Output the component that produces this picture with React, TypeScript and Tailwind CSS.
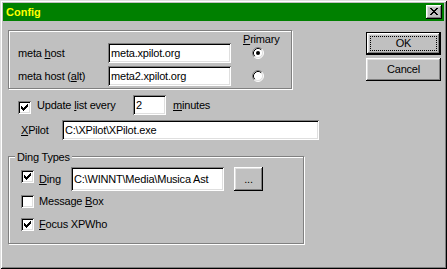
import React from "react";

// classic 3D bevels
const sunken =
  "shadow-[inset_1px_1px_0_#808080,inset_-1px_-1px_0_#ffffff,inset_2px_2px_0_#000000,inset_-2px_-2px_0_#dfdfdf]";
const raised =
  "shadow-[inset_-1px_-1px_0_#000000,inset_1px_1px_0_#ffffff,inset_-2px_-2px_0_#808080,inset_2px_2px_0_#dfdfdf]";
const etched = "border border-[#808080] shadow-[inset_1px_1px_0_#ffffff,1px_1px_0_#ffffff]";

function TextBox({ value, className }: { value: string; className: string }) {
  return (
    <div className={`bg-white ${sunken} pl-[3px] flex items-center overflow-hidden whitespace-nowrap shrink-0 ${className}`}>
      {value}
    </div>
  );
}

function CheckBox({ checked = false, className = "" }: { checked?: boolean; className?: string }) {
  return (
    <div className={`w-[13px] h-[13px] shrink-0 bg-white ${sunken} ${className}`}>
      {checked && (
        <svg width="13" height="13" className="block" shapeRendering="crispEdges">
          <path
            d="M3 5h1v3H3z M4 6h1v3H4z M5 7h1v3H5z M6 6h1v3H6z M7 5h1v3H7z M8 4h1v3H8z M9 3h1v3H9z"
            fill="#000"
          />
        </svg>
      )}
    </div>
  );
}

function Radio({ checked = false }: { checked?: boolean }) {
  return (
    <svg width="12" height="12" viewBox="0 0 12 12" className="block shrink-0">
      <circle cx="6" cy="6" r="5" fill="#fff" />
      <path d="M2.11 9.89A5.5 5.5 0 0 1 9.89 2.11" stroke="#808080" fill="none" />
      <path d="M9.89 2.11A5.5 5.5 0 0 1 2.11 9.89" stroke="#fff" fill="none" />
      <path d="M2.82 9.18A4.5 4.5 0 0 1 9.18 2.82" stroke="#000" fill="none" />
      <path d="M9.18 2.82A4.5 4.5 0 0 1 2.82 9.18" stroke="#dfdfdf" fill="none" />
      {checked && <circle cx="6" cy="6" r="2" fill="#000" />}
    </svg>
  );
}

export default function App() {
  return (
    <div className="w-[447px] h-[269px] bg-[#c0c0c0] p-[3px] flex flex-col font-['Liberation_Sans',Arial,sans-serif] text-[11px] leading-[13px] tracking-[-0.2px] text-black shadow-[inset_1px_1px_0_#dfdfdf,inset_-1px_-1px_0_#000000,inset_2px_2px_0_#ffffff,inset_-2px_-2px_0_#808080]">
      {/* Title bar */}
      <div className="h-[18px] shrink-0 bg-[#008000] flex items-center justify-between pl-[3px] pr-[2px]">
        <span className="text-[#ffff00] font-bold tracking-normal">Config</span>
        <div className={`w-[16px] h-[14px] bg-[#c0c0c0] ${raised} pl-[4px] pt-[3px]`}>
          <svg width="8" height="7" className="block" shapeRendering="crispEdges">
            <path
              d="M0 0h2v1H0z M6 0h2v1H6z M1 1h2v1H1z M5 1h2v1H5z M2 2h4v1H2z M3 3h2v1H3z M2 4h4v1H2z M1 5h2v1H1z M5 5h2v1H5z M0 6h2v1H0z M6 6h2v1H6z"
              fill="#000"
            />
          </svg>
        </div>
      </div>

      <div className="flex flex-1">
        {/* Left column */}
        <div className="pl-[5px] pt-[9px] flex flex-col">
          <div className={`w-[284px] h-[59px] ${etched} pl-[9px] flex flex-col`}>
            <div className="h-[12px] pt-[3px] leading-[10px] pl-[225px]">
              <u>P</u>rimary
            </div>
            <div className="h-[20px] flex items-center">
              <span className="w-[90px]">
                meta <u>h</u>ost
              </span>
              <TextBox value="meta.xpilot.org" className="w-[123px] h-[20px]" />
              <div className="ml-[21px]">
                <Radio checked />
              </div>
            </div>
            <div className="mt-[3px] h-[20px] flex items-center">
              <span className="w-[90px]">
                meta host (<u>a</u>lt)
              </span>
              <TextBox value="meta2.xpilot.org" className="w-[123px] h-[20px]" />
              <div className="ml-[21px]">
                <Radio />
              </div>
            </div>
          </div>

          <div className="mt-[6px] h-[20px] flex items-center pl-[10px]">
            <CheckBox checked className="self-start mt-[6px]" />
            <span className="ml-[6px] w-[96px]">
              Update <u>l</u>ist every
            </span>
            <TextBox value="2" className="w-[33px] h-[20px]" />
            <span className="ml-[7px]">
              <u>m</u>inutes
            </span>
          </div>

          <div className="mt-[5px] h-[20px] flex items-center pl-[13px]">
            <span className="w-[41px]">
              <u>X</u>Pilot
            </span>
            <TextBox value={"C:\\XPilot\\XPilot.exe"} className="w-[257px] h-[20px]" />
          </div>

          <div className={`mt-[16px] relative w-[296px] h-[88px] ${etched} flex flex-col pt-[10px] pl-[12px]`}>
            <span className="absolute left-[6px] top-[-6px] px-[2px] bg-[#c0c0c0] leading-[12px]">Ding Types</span>
            <div className="h-[24px] flex items-center">
              <CheckBox checked className="self-start mt-[3px]" />
              <span className="ml-[5px] w-[32px]">
                <u>D</u>ing
              </span>
              <TextBox value={"C:\\WINNT\\Media\\Musica Ast"} className="w-[153px] h-[24px]" />
              <div className={`ml-[10px] w-[29px] h-[24px] ${raised} flex items-center justify-center`}>...</div>
            </div>
            <div className="mt-[4px] h-[13px] flex items-center">
              <CheckBox />
              <span className="ml-[5px]">
                Message <u>B</u>ox
              </span>
            </div>
            <div className="mt-[10px] h-[13px] flex items-center">
              <CheckBox checked />
              <span className="ml-[5px]">
                <u>F</u>ocus XPWho
              </span>
            </div>
          </div>
        </div>

        {/* Right column: buttons */}
        <div className="ml-auto pt-[11px] pr-[3px] flex flex-col gap-[3px]">
          <div className="w-[75px] h-[23px] border border-black">
            <div className={`h-full ${raised} p-[3px]`}>
              <div className="h-full border border-dotted border-black flex items-center justify-center">OK</div>
            </div>
          </div>
          <div className={`w-[75px] h-[23px] ${raised} flex items-center justify-center`}>Cancel</div>
        </div>
      </div>
    </div>
  );
}
